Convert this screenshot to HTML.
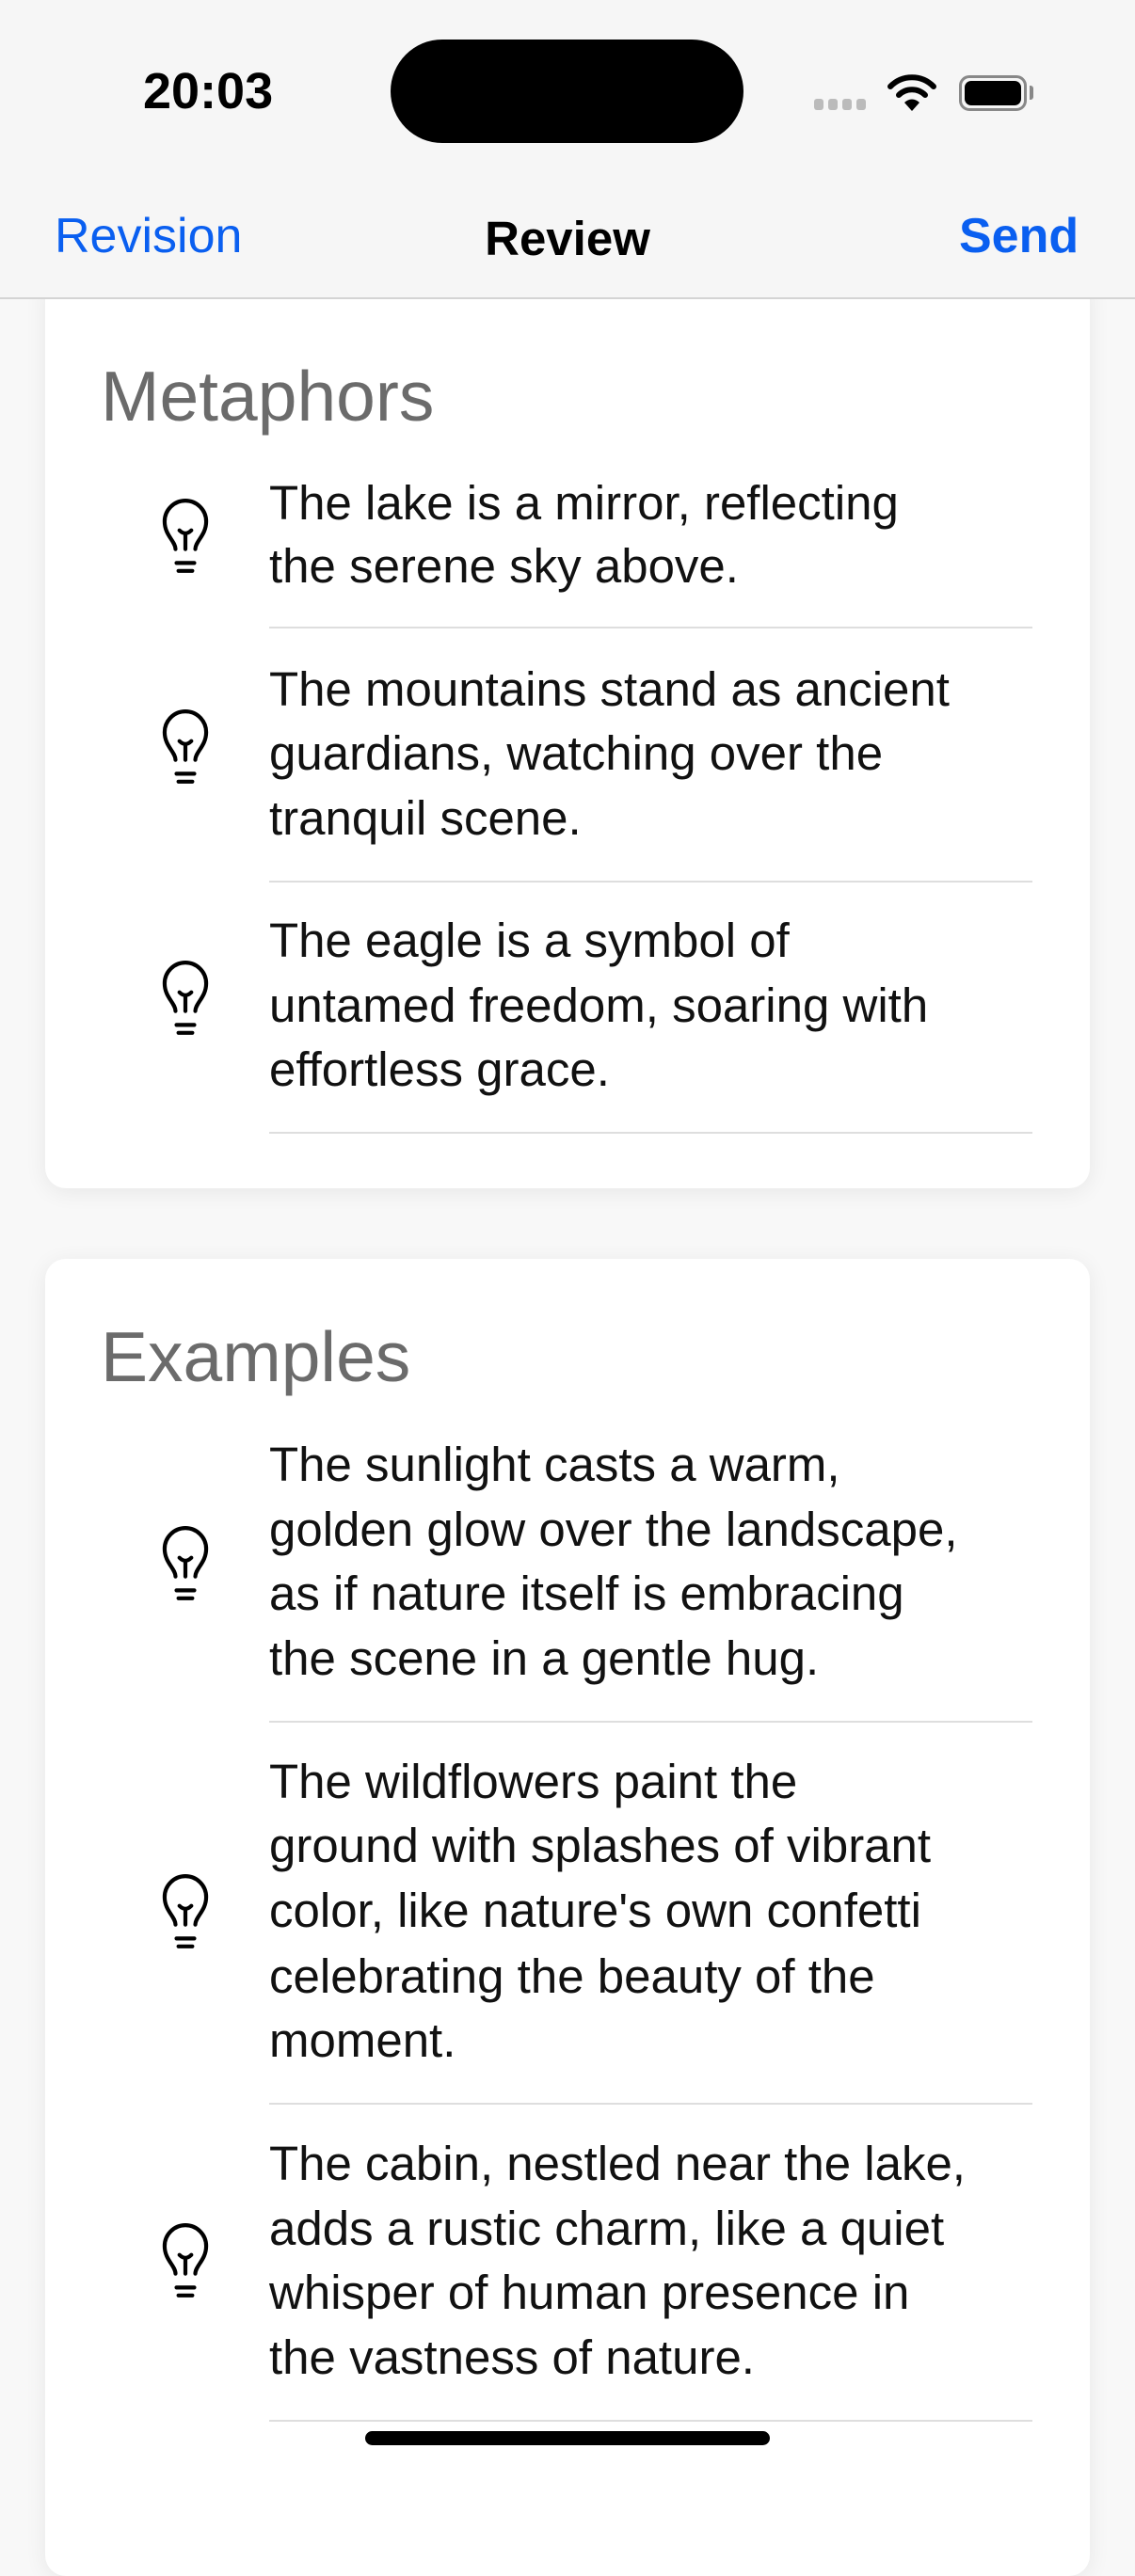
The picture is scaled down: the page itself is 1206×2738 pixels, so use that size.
<!DOCTYPE html>
<html><head><meta charset="utf-8"><style>
*{margin:0;padding:0;box-sizing:border-box}
body{width:1206px;height:2622px;background:#f8f8f8;font-family:"Liberation Sans",sans-serif;position:relative;overflow:hidden}
.abs{position:absolute}
.card{position:absolute;left:48px;width:1110px;background:#fff;border-radius:22px;box-shadow:0 4px 24px rgba(0,0,0,0.07)}
.t{position:absolute;left:286px;font-size:51px;line-height:68px;height:68px;color:#111;white-space:nowrap}
.h{position:absolute;left:107px;font-size:75px;color:#6b6b6b;line-height:90px;height:90px}
.sep{position:absolute;left:286px;width:811px;height:2px;background:#dedede}
.ic{position:absolute;left:170px;width:54px;height:82px}
</style></head><body>
<div class="abs" style="left:0;top:0;width:1206px;height:318px;background:#f6f6f6;border-bottom:2px solid #d4d4d4;z-index:5">
 <div class="abs" style="left:152px;top:67px;font-size:54px;font-weight:bold;line-height:60px">20:03</div>
 <div class="abs" style="left:415px;top:42px;width:375px;height:110px;border-radius:55px;background:#000"></div>
 <div class="abs" style="left:865px;top:105px;width:60px;height:12px">
  <span class="abs" style="left:0;width:10px;height:12px;border-radius:3px;background:#bbb"></span>
  <span class="abs" style="left:15px;width:10px;height:12px;border-radius:3px;background:#bbb"></span>
  <span class="abs" style="left:30px;width:10px;height:12px;border-radius:3px;background:#bbb"></span>
  <span class="abs" style="left:45px;width:10px;height:12px;border-radius:3px;background:#bbb"></span>
 </div>
 <svg class="abs" style="left:943px;top:78px" width="52" height="42" viewBox="0 0 52 42"><path d="M3 14 A32 32 0 0 1 49 14" fill="none" stroke="#000" stroke-width="6" stroke-linecap="round"/><path d="M12 23 A20 20 0 0 1 40 23" fill="none" stroke="#000" stroke-width="6" stroke-linecap="round"/><path d="M18 31 L26 40 L34 31 A11 11 0 0 0 18 31Z" fill="#000"/></svg>
 <div class="abs" style="left:1019px;top:80px;width:72px;height:38px;border:3px solid #888;border-radius:11px"></div>
 <div class="abs" style="left:1025px;top:86px;width:60px;height:26px;background:#000;border-radius:7px"></div>
 <div class="abs" style="left:1094px;top:91px;width:4px;height:15px;background:#888;border-radius:0 3px 3px 0"></div>
 <div class="abs" style="left:58px;top:221px;font-size:52px;color:#0a5ff0;line-height:60px">Revision</div>
 <div class="abs" style="left:0;width:1206px;text-align:center;top:224px;font-size:51px;font-weight:bold;line-height:60px">Review</div>
 <div class="abs" style="left:1019px;top:221px;font-size:52px;font-weight:bold;color:#0a5ff0;line-height:60px">Send</div>
</div>

<div class="card" style="top:290px;height:973px"></div>
<div class="card" style="top:1338px;height:1400px"></div>

<div class="h" style="top:376px">Metaphors</div>
<svg class="ic" style="top:529px" viewBox="0 0 50 78"><g fill="none" stroke="#000" stroke-width="4" stroke-linecap="round"><path d="M15 52 C15 44 4 38 4 24 A21 21 0 0 1 46 24 C46 38 35 44 35 52"/><path d="M25 52 V36 M19 33 Q25 39 31 33"/><path d="M16 66 H34 M18 74 H32"/></g></svg>
<div class="t" style="top:501px">The lake is a mirror, reflecting</div>
<div class="t" style="top:568px">the serene sky above.</div>
<div class="sep" style="top:666px"></div>

<svg class="ic" style="top:753px" viewBox="0 0 50 78"><g fill="none" stroke="#000" stroke-width="4" stroke-linecap="round"><path d="M15 52 C15 44 4 38 4 24 A21 21 0 0 1 46 24 C46 38 35 44 35 52"/><path d="M25 52 V36 M19 33 Q25 39 31 33"/><path d="M16 66 H34 M18 74 H32"/></g></svg>
<div class="t" style="top:699px">The mountains stand as ancient</div>
<div class="t" style="top:767px">guardians, watching over the</div>
<div class="t" style="top:836px">tranquil scene.</div>
<div class="sep" style="top:936px"></div>

<svg class="ic" style="top:1020px" viewBox="0 0 50 78"><g fill="none" stroke="#000" stroke-width="4" stroke-linecap="round"><path d="M15 52 C15 44 4 38 4 24 A21 21 0 0 1 46 24 C46 38 35 44 35 52"/><path d="M25 52 V36 M19 33 Q25 39 31 33"/><path d="M16 66 H34 M18 74 H32"/></g></svg>
<div class="t" style="top:966px">The eagle is a symbol of</div>
<div class="t" style="top:1035px">untamed freedom, soaring with</div>
<div class="t" style="top:1103px">effortless grace.</div>
<div class="sep" style="top:1203px"></div>

<div class="h" style="top:1397px">Examples</div>
<svg class="ic" style="top:1621px" viewBox="0 0 50 78"><g fill="none" stroke="#000" stroke-width="4" stroke-linecap="round"><path d="M15 52 C15 44 4 38 4 24 A21 21 0 0 1 46 24 C46 38 35 44 35 52"/><path d="M25 52 V36 M19 33 Q25 39 31 33"/><path d="M16 66 H34 M18 74 H32"/></g></svg>
<div class="t" style="top:1523px">The sunlight casts a warm,</div>
<div class="t" style="top:1592px">golden glow over the landscape,</div>
<div class="t" style="top:1660px">as if nature itself is embracing</div>
<div class="t" style="top:1729px">the scene in a gentle hug.</div>
<div class="sep" style="top:1829px"></div>

<svg class="ic" style="top:1991px" viewBox="0 0 50 78"><g fill="none" stroke="#000" stroke-width="4" stroke-linecap="round"><path d="M15 52 C15 44 4 38 4 24 A21 21 0 0 1 46 24 C46 38 35 44 35 52"/><path d="M25 52 V36 M19 33 Q25 39 31 33"/><path d="M16 66 H34 M18 74 H32"/></g></svg>
<div class="t" style="top:1860px">The wildflowers paint the</div>
<div class="t" style="top:1928px">ground with splashes of vibrant</div>
<div class="t" style="top:1997px">color, like nature's own confetti</div>
<div class="t" style="top:2067px">celebrating the beauty of the</div>
<div class="t" style="top:2135px">moment.</div>
<div class="sep" style="top:2235px"></div>

<svg class="ic" style="top:2362px" viewBox="0 0 50 78"><g fill="none" stroke="#000" stroke-width="4" stroke-linecap="round"><path d="M15 52 C15 44 4 38 4 24 A21 21 0 0 1 46 24 C46 38 35 44 35 52"/><path d="M25 52 V36 M19 33 Q25 39 31 33"/><path d="M16 66 H34 M18 74 H32"/></g></svg>
<div class="t" style="top:2266px">The cabin, nestled near the lake,</div>
<div class="t" style="top:2335px">adds a rustic charm, like a quiet</div>
<div class="t" style="top:2403px">whisper of human presence in</div>
<div class="t" style="top:2472px">the vastness of nature.</div>
<div class="sep" style="top:2572px"></div>

<div class="abs" style="left:388px;top:2584px;width:430px;height:15px;border-radius:8px;background:#000"></div>
</body></html>
